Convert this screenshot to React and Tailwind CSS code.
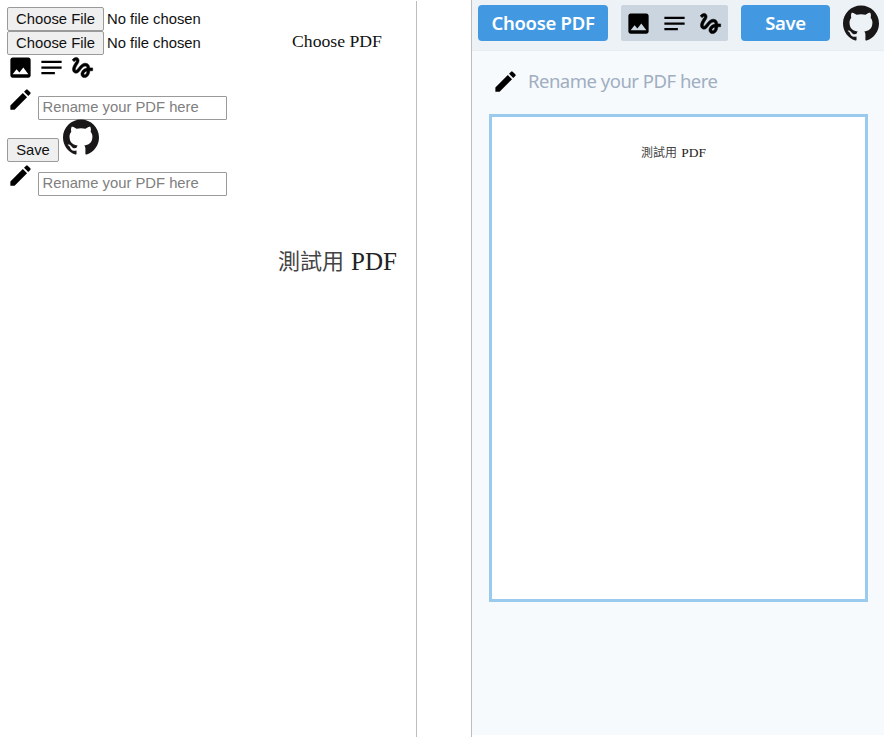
import React from "react";
import { MdImage, MdNotes, MdGesture, MdEdit } from "react-icons/md";
import { SiGithub } from "react-icons/si";

const ARIAL = "font-['Liberation_Sans',Arial,sans-serif]";
const SERIF = "font-['Liberation_Serif','Times_New_Roman','Noto_Sans_CJK_TC',serif]";
const UI = "font-['Noto_Sans','Open_Sans',sans-serif]";

function FileRow() {
  return (
    <div className={`flex h-6 items-start text-[14.8px] leading-[22px] ${ARIAL}`}>
      <button className="h-6 w-[97px] shrink-0 whitespace-nowrap rounded-[2px] border border-[#9a9a9a] bg-[#efefef] text-center leading-[22px] text-[#111]">Choose File</button>
      <span className="ml-[3px] mt-px whitespace-nowrap text-[#111]">No file chosen</span>
    </div>
  );
}

function PlainRename() {
  return (
    <div className="flex h-[34px] items-start">
      <MdEdit className="-ml-[0.5px] -mt-[0.5px] size-[27px] shrink-0 text-black" />
      <input
        placeholder="Rename your PDF here"
        className={`ml-[4.5px] mt-[10px] h-[23.5px] w-[189px] rounded-[1px] border border-[#9a9a9a] bg-white px-[3.5px] pb-[2px] text-[14.8px] leading-[20px] placeholder:text-[#808080] placeholder:opacity-100 ${ARIAL}`}
      />
    </div>
  );
}

function ToolIcons() {
  return (
    <>
      <MdImage className="size-[27px]" />
      <MdNotes className="size-[27px]" />
      <MdGesture className="size-[27px] [&>path[fill=none]]:stroke-none" strokeWidth="0.5" />
    </>
  );
}

function PlainPage() {
  return (
    <section className="mt-px flex h-[736px] w-[417px] flex-col border-r border-[#bdbdbd] bg-white pl-[7px] pt-[6px]">
      <div className="flex h-12 shrink-0">
        <div className="w-[285px]">
          <FileRow />
          <FileRow />
        </div>
        <span className={`mt-6 whitespace-nowrap text-[17.7px] leading-[20px] text-[#111] ${SERIF}`}>Choose PDF</span>
      </div>
      <div className="-mt-px mb-px flex h-[31px] shrink-0 gap-1 text-black">
        <ToolIcons />
      </div>
      <PlainRename />
      <div className="flex h-[42px] shrink-0 items-start pt-px">
        <button className={`mt-[17px] h-6 w-[52px] rounded-[2px] border border-[#9a9a9a] bg-[#efefef] text-[14.8px] leading-[22px] text-[#111] ${ARIAL}`}>Save</button>
        <SiGithub className="ml-1 -mt-[2.5px] size-9 text-[#191717]" />
      </div>
      <PlainRename />
      <div className={`mt-[51px] flex items-center gap-[7px] pl-[271px] text-[#222] ${SERIF}`}>
        <span className="whitespace-nowrap text-[22px] leading-[30px] text-[#444]">測試用</span>
        <span className="text-[25px] leading-[30px]">PDF</span>
      </div>
    </section>
  );
}

function StyledPage() {
  return (
    <section className="flex h-[737px] w-[413px] border-l border-[#bdbdbd]">
      <div className={`flex h-[735px] w-full flex-col bg-[#f6fafd] ${UI}`}>
        <header className="flex h-[51px] shrink-0 items-start border-b border-[#e8edf1] bg-[#edf2f7] pl-[6px] pt-[5px]">
          <button className="h-9 w-[130px] whitespace-nowrap rounded bg-[#4299e1] text-[18.5px] font-semibold leading-9 tracking-[-0.3px] text-white">Choose PDF</button>
          <div className="ml-[13px] flex h-9 w-[107px] items-center gap-[9px] rounded-[2px] bg-[#cbd5e0] pl-1 text-black">
            <ToolIcons />
          </div>
          <button className="ml-[13px] h-9 w-[89px] rounded bg-[#4299e1] text-[18.5px] font-semibold leading-9 tracking-[-0.3px] text-white">Save</button>
          <SiGithub className="ml-[13px] size-9 text-[#191717]" />
        </header>
        <div className="flex h-[63px] shrink-0 items-center pb-[3px] pl-5">
          <MdEdit className="size-[27px] shrink-0 text-black" />
          <input
            placeholder="Rename your PDF here"
            className="ml-[9px] w-[300px] bg-transparent pb-px text-[18.5px] tracking-[-0.5px] placeholder:text-[#a0aec0] placeholder:opacity-100"
          />
        </div>
        <div className={`ml-[17px] flex h-[488px] w-[379px] items-start justify-center gap-1 border-[3px] border-[#9bcaef] bg-white pr-[10px] pt-[26px] text-[#222] ${SERIF}`}>
          <span className="whitespace-nowrap text-[12px] leading-[20px] text-[#444]">測試用</span>
          <span className="text-[13.5px] leading-[20px]">PDF</span>
        </div>
      </div>
    </section>
  );
}

export default function App() {
  return (
    <main className="flex h-[737px] w-[886px] gap-[54px] overflow-hidden bg-white">
      <PlainPage />
      <StyledPage />
    </main>
  );
}
